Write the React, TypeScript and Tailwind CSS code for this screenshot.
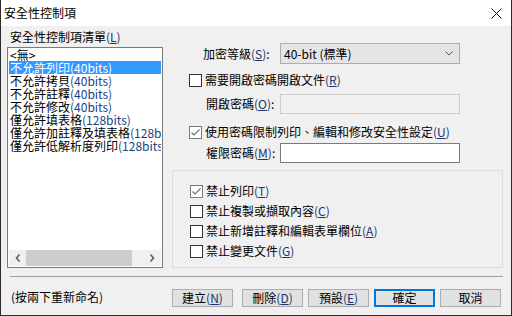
import React from "react";

const items = [
  { name: "<無>", bits: "" },
  { name: "不允許列印", bits: "(40bits)", sel: true },
  { name: "不允許拷貝", bits: "(40bits)" },
  { name: "不允許註釋", bits: "(40bits)" },
  { name: "不允許修改", bits: "(40bits)" },
  { name: "僅允許填表格", bits: "(128bits)" },
  { name: "僅允許加註釋及填表格", bits: "(128bits)" },
  { name: "僅允許低解析度列印", bits: "(128bits)" },
];

function Acc({ k }: { k: string }) {
  return (
    <span className="text-[#1b3570]">
      (<span className="underline">{k}</span>)
    </span>
  );
}

function Check({ checked }: { checked?: boolean }) {
  return (
    <span
      className={
        "w-[13px] h-[13px] shrink-0 bg-white flex items-center justify-center border " +
        (checked ? "border-[#7a7a7a]" : "border-[#333333]")
      }
    >
      {checked && (
        <svg width="11" height="11" viewBox="0 0 11 11">
          <path d="M1.5 5.5 L4 8 L9.5 2.5" fill="none" stroke="#6e6e6e" strokeWidth="1.1" />
        </svg>
      )}
    </span>
  );
}

function CheckRow({ checked, label, k, className = "" }: { checked?: boolean; label: string; k: string; className?: string }) {
  return (
    <div className={"flex items-center h-[16px] pl-[17px] " + className}>
      <Check checked={checked} />
      <span className="ml-[3px] whitespace-nowrap">
        {label}
        <Acc k={k} />
      </span>
    </div>
  );
}

function Btn({ label, k, def, className = "" }: { label: string; k?: string; def?: boolean; className?: string }) {
  return (
    <div
      className={
        "w-[61px] h-[18px] flex items-center justify-center bg-[#e1e1e1] " +
        (def ? "border-2 border-[#0078d7] " : "border border-[#adadad] ") +
        className
      }
    >
      {label}
      {k && <Acc k={k} />}
    </div>
  );
}

export default function App() {
  return (
    <div className="w-[512px] h-[316px] flex flex-col border-x border-b border-[#2b2b2b] font-['Noto_Sans_CJK_TC',sans-serif] text-[12px] leading-[16px] text-black select-none">
      {/* title bar */}
      <div className="h-[26px] shrink-0 bg-white flex items-center justify-between pl-[3px] pr-[9px]">
        <span>安全性控制項</span>
        <svg width="11" height="11" viewBox="0 0 11 11">
          <path d="M0.5 0.5 L10.5 10.5 M10.5 0.5 L0.5 10.5" stroke="#111" strokeWidth="1" />
        </svg>
      </div>

      <div className="flex-1 bg-[#f0f0f0] pl-[6px] pt-[3px] flex flex-col">
        <div className="flex">
          {/* left column */}
          <div className="w-[156px] flex flex-col">
            <div className="h-[16px] pl-[3px] whitespace-nowrap">
              安全性控制項清單
              <Acc k="L" />
            </div>
            <div className="mt-[2px] h-[221px] border border-[#7a7a7a] bg-white px-px pb-px flex flex-col">
              <div className="flex-1 overflow-hidden">
                {items.map((it) => (
                  <div
                    key={it.name}
                    className={
                      "h-[13px] leading-[13px] pl-[1px] whitespace-nowrap " +
                      (it.sel ? "bg-[#3399ff] text-white" : "")
                    }
                  >
                    {it.name}
                    <span className={it.sel ? "text-white" : "text-[#1a3f88]"}>{it.bits}</span>
                  </div>
                ))}
              </div>
              <div className="h-[16px] flex bg-[#f0f0f0]">
                <div className="w-[17px] flex items-center justify-center">
                  <svg width="6" height="8" viewBox="0 0 6 8">
                    <path d="M4.5 0.5 L1.5 4 L4.5 7.5" fill="none" stroke="#606060" strokeWidth="1.6" />
                  </svg>
                </div>
                <div className="w-[106px] bg-[#cdcdcd]" />
                <div className="flex-1 flex items-center justify-end pr-[6px]">
                  <svg width="6" height="8" viewBox="0 0 6 8">
                    <path d="M1.5 0.5 L4.5 4 L1.5 7.5" fill="none" stroke="#606060" strokeWidth="1.6" />
                  </svg>
                </div>
              </div>
            </div>
          </div>

          {/* right column */}
          <div className="ml-[9px] w-[331px] mt-[14px] flex flex-col">
            <div className="flex items-center h-[21px] pl-[31px]">
              <span className="w-[77px] whitespace-nowrap">
                加密等級
                <Acc k="S" />:
              </span>
              <div className="w-[180px] h-[21px] bg-[#e5e5e5] border border-[#adadad] flex items-center justify-between pl-[3px] pr-[6px]">
                <span>40-bit (標準)</span>
                <svg width="8" height="5" viewBox="0 0 8 5">
                  <path d="M0.5 0.5 L4 4 L7.5 0.5" fill="none" stroke="#555" strokeWidth="1" />
                </svg>
              </div>
            </div>

            <CheckRow label="需要開啟密碼開啟文件" k="R" className="mt-[8px]" />

            <div className="flex items-center h-[20px] mt-[6px] pl-[34px]">
              <span className="w-[74px] whitespace-nowrap">
                開啟密碼
                <Acc k="O" />:
              </span>
              <div className="w-[180px] h-[20px] bg-[#f0f0f0] border border-[#cccccc]" />
            </div>

            <CheckRow checked label="使用密碼限制列印、編輯和修改安全性設定" k="U" className="mt-[10px]" />

            <div className="flex items-center h-[20px] mt-[3px] pl-[34px]">
              <span className="w-[74px] whitespace-nowrap">
                權限密碼
                <Acc k="M" />:
              </span>
              <div className="w-[180px] h-[20px] bg-white border border-[#7a7a7a]" />
            </div>

            <div className="mt-[7px] h-[98px] border border-[#dcdcdc] pt-[10px] flex flex-col">
              <div className="h-[20px] flex items-center"><CheckRow checked label="禁止列印" k="T" className="pl-[16px]" /></div>
              <div className="h-[20px] flex items-center"><CheckRow label="禁止複製或擷取內容" k="C" className="pl-[16px]" /></div>
              <div className="h-[20px] flex items-center"><CheckRow label="禁止新增註釋和編輯表單欄位" k="A" className="pl-[16px]" /></div>
              <div className="h-[20px] flex items-center"><CheckRow label="禁止變更文件" k="G" className="pl-[16px]" /></div>
            </div>
          </div>
        </div>

        <div className="mt-[8px] ml-[3px] w-[493px] border-t border-[#a0a0a0]" />

        <div className="mt-[12px] flex items-start">
          <div className="w-[165px] pl-[4px] whitespace-nowrap">(按兩下重新命名)</div>
          <Btn label="建立" k="N" />
          <Btn label="刪除" k="D" className="ml-[9px]" />
          <Btn label="預設" k="E" className="ml-[5px]" />
          <Btn label="確定" def className="ml-[5px]" />
          <Btn label="取消" className="ml-[5px]" />
        </div>
      </div>
    </div>
  );
}
